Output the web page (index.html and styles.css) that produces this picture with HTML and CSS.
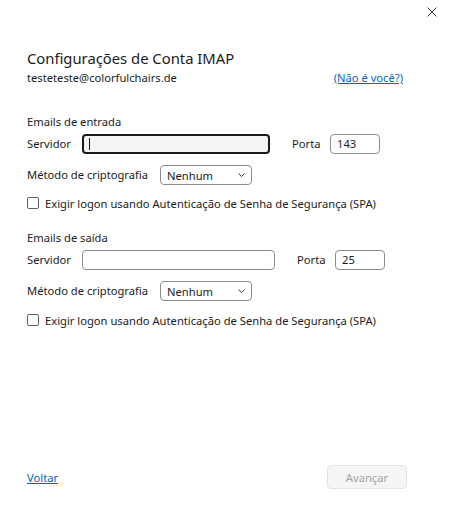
FILE: index.html
```html
<!DOCTYPE html>
<html lang="pt">
<head>
<meta charset="utf-8">
<title>Configurações de Conta IMAP</title>
<link rel="stylesheet" href="styles.css">
</head>
<body>
<div class="dialog">
  <div class="topbar">
    <button class="close" aria-label="Fechar">
      <svg width="10" height="10" viewBox="0 0 10 10"><path d="M0.5 0.5 L9.5 9.5 M9.5 0.5 L0.5 9.5" stroke="#3a3a3a" stroke-width="1" fill="none"/></svg>
    </button>
  </div>
  <div class="content">
    <h1 class="title">Configurações de Conta IMAP</h1>
    <div class="account">
      <span>testeteste@colorfulchairs.de</span>
      <a class="link notyou" href="#">(Não é você?)</a>
    </div>

    <div class="section-label s1">Emails de entrada</div>
    <div class="row server">
      <span class="lbl">Servidor</span>
      <span class="input focused w-in"><span class="caret"></span></span>
      <span class="lbl porta">Porta</span>
      <span class="input port">143</span>
    </div>
    <div class="row method">
      <span class="lbl">Método de criptografia</span>
      <span class="select">Nenhum
        <svg class="chev" width="7" height="4" viewBox="0 0 7 4"><path d="M0.5 0.5 L3.5 3.5 L6.5 0.5" stroke="#333" stroke-width="1" fill="none"/></svg>
      </span>
    </div>
    <label class="row check">
      <span class="box"></span>
      <span>Exigir logon usando Autenticação de Senha de Segurança (SPA)</span>
    </label>

    <div class="section-label s2">Emails de saída</div>
    <div class="row server">
      <span class="lbl">Servidor</span>
      <span class="input w-out"></span>
      <span class="lbl porta porta2">Porta</span>
      <span class="input port">25</span>
    </div>
    <div class="row method">
      <span class="lbl">Método de criptografia</span>
      <span class="select">Nenhum
        <svg class="chev" width="7" height="4" viewBox="0 0 7 4"><path d="M0.5 0.5 L3.5 3.5 L6.5 0.5" stroke="#333" stroke-width="1" fill="none"/></svg>
      </span>
    </div>
    <label class="row check c2">
      <span class="box"></span>
      <span>Exigir logon usando Autenticação de Senha de Segurança (SPA)</span>
    </label>

    <div class="footer">
      <a class="link" href="#">Voltar</a>
      <button class="next" disabled>Avançar</button>
    </div>
  </div>
</div>
</body>
</html>
```

FILE: styles.css
```css
* { box-sizing: border-box; }
html, body { margin: 0; padding: 0; background: #ffffff; }
body {
  font-family: "Noto Sans", "Open Sans", "DejaVu Sans", sans-serif;
  font-size: 11.2px;
  color: #1b1b1b;
  width: 472px;
  height: 518px;
  overflow: hidden;
}
.dialog { width: 472px; height: 518px; display: flex; flex-direction: column; }
.topbar {
  height: 24px;
  display: flex;
  justify-content: flex-end;
  align-items: center;
  padding-right: 35px;
}
.close {
  border: 0; background: transparent; padding: 0; margin: 0;
  width: 10px; height: 10px; display: flex;
}
.content { padding: 0 0 0 27px; display: flex; flex-direction: column; }
.title {
  margin: 22px 0 0 0;
  font-size: 14.8px;
  font-weight: 400;
  line-height: 24px;
  height: 24px;
}
.account {
  height: 16px; line-height: 16px;
  display: flex;
}
.link { color: #0067c0; text-decoration: underline; }
.notyou { margin-left: auto; margin-right: 69px; }
.section-label { height: 16px; line-height: 16px; }
.s1 { margin-top: 28px; }
.s2 { margin-top: 19px; }
.row { display: flex; align-items: center; }
.server { height: 20px; margin-top: 4px; }
.lbl { line-height: 16px; }
.input {
  height: 20px;
  border: 1px solid #8c8c8c;
  border-radius: 4px;
  background: #fff;
  display: flex; align-items: center;
  padding-left: 8px;
  line-height: 16px;
}
.server .lbl:first-child { width: 55px; }
.w-in { width: 188px; }
.w-out { width: 193px; }
.focused {
  border: 2px solid #1a1a1a;
  background: #f4f4f4;
  padding-left: 5px;
}
.caret { width: 1px; height: 12px; background: #1a1a1a; }
.porta { margin-left: 22px; width: 38px; }
.port { width: 50px; padding-left: 6px; }
.method { height: 20px; margin-top: 11px; }
.method .lbl { width: 133px; }
.select {
  width: 92px; height: 20px;
  border: 1px solid #8c8c8c;
  border-radius: 4px;
  display: flex; align-items: center;
  padding-left: 6px;
}
.chev { margin-left: auto; margin-right: 6px; }
.check { height: 16px; margin-top: 10px; gap: 6px; }
.c2 { margin-top: 11px; }
.box {
  width: 12px; height: 12px;
  border: 1px solid #5f5f5f;
  border-radius: 2px;
  background: #fff;
  flex: none;
}
.footer {
  margin-top: 137px;
  height: 24px;
  display: flex; align-items: center;
}
.next {
  margin-left: auto;
  margin-right: 65px;
  width: 80px; height: 24px;
  border: 1px solid #e3e3e3;
  border-radius: 4px;
  background: #f5f5f5;
  color: #a3a3a3;
  font-family: inherit;
  font-size: 11.2px;
  padding: 0;
}
```
